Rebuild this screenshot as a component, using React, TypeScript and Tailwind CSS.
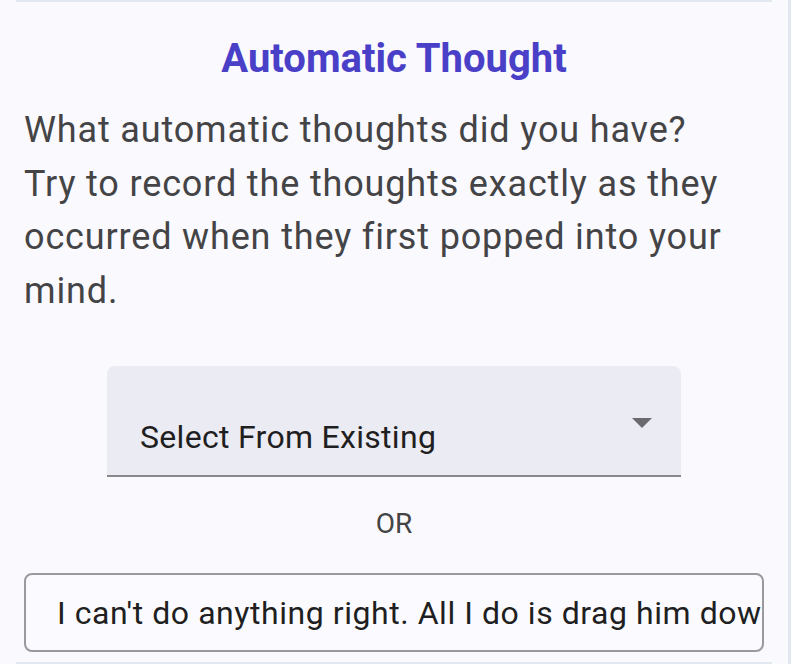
export default function App() {
  return (
    <div className="min-h-screen bg-[#f9f9fe] flex" style={{ fontFamily: "Roboto, 'Noto Sans', sans-serif" }}>
      <div className="flex-1 h-[664px] overflow-hidden border-r-[3px] border-[#e2e8f0] pl-4 pr-[16px]">
        <div className="border-t-2 border-b-2 border-[#e2e8f0] h-[664px] px-2 flex flex-col">
          <h2 className="text-center text-[40px] font-bold text-[#4a40c8] leading-[48px] mt-[33px]">
            Automatic Thought
          </h2>
          <p className="text-[36px] leading-[53.5px] text-[#444446] mt-[21px] tracking-[0.85px]">
            <span className="block">What automatic thoughts did you have?</span>
            <span className="block">Try to record the thoughts exactly as they occurred when they first popped into your mind.</span>
          </p>
          <div className="mt-[48px] mx-auto w-[574px] h-[111px] shrink-0 bg-[#ebebf3] rounded-t-lg border-b-2 border-[#88888d] flex items-start justify-between pl-[33px] pr-[29px]">
            <span className="text-[32px] leading-[48px] tracking-[0.3px] text-[#1f1f22] mt-[47px]">Select From Existing</span>
            <svg width="20" height="10" viewBox="0 0 20 10" className="mt-[52px]">
              <path d="M0 0 L20 0 L10 10 Z" fill="#6b6b6f" />
            </svg>
          </div>
          <div className="text-center text-[28px] text-[#444446] mt-[30px] leading-[34px]">OR</div>
          <div className="mt-[32px] h-[79px] shrink-0 border-2 border-[#9a9a9e] rounded-lg bg-[#fbfbff] flex items-center overflow-hidden pl-[31px] pr-[10px]">
            <span className="text-[32px] tracking-[0.55px] text-[#1f1f22] whitespace-nowrap">I can't do anything right. All I do is drag him down and make everything worse.</span>
          </div>
        </div>
      </div>
    </div>
  );
}
